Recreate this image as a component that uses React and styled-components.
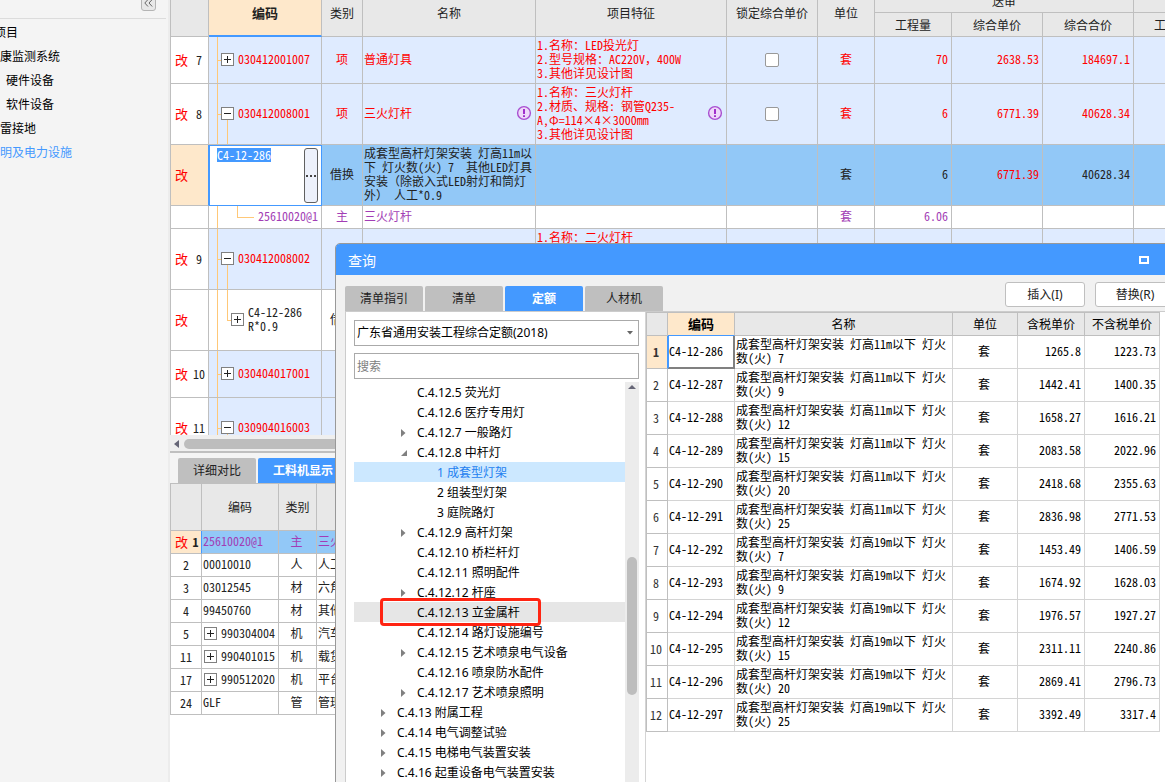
import React from "react";
import styled, { createGlobalStyle, css } from "styled-components";

const songFont = `"Noto Sans Mono CJK SC", "Noto Sans CJK SC", "Liberation Mono", monospace`;
const uiFont = `"Noto Sans", "Noto Sans CJK SC", sans-serif`;

const blue = "#4499ff";
const red = "#ff0000";
const purple = "#a23db5";
const line = "#bfbfbf";
const guide = "#ffc878";

const GlobalStyle = createGlobalStyle`
  * {
    box-sizing: border-box;
  }

  body {
    margin: 0;
    overflow: hidden;
    background: #ffffff;
    color: #222222;
    font-family: ${uiFont};
    font-size: 12px;
    line-height: 14px;
  }

  button, input, select {
    font: inherit;
    color: inherit;
  }
`;

const Page = styled.div`
  position: relative;
  display: flex;
  height: 100vh;
  overflow: hidden;
`;

/* ---------- project tree on the left ---------- */

const Sidebar = styled.nav`
  flex: 0 0 170px;
  overflow: hidden;
  background: #f4f4f4;
  border-right: 2px solid #ececec;
`;

const SidebarHead = styled.div`
  display: flex;
  justify-content: flex-end;
  height: 19px;
  margin-right: 2px;
  padding-right: 10px;
  border-bottom: 1px solid #dcdcdc;
`;

const CollapseButton = styled.button`
  display: flex;
  align-items: center;
  justify-content: center;
  width: 15px;
  height: 16px;
  margin-top: -5px;
  padding: 0;
  border: 1px solid #b4b4b4;
  border-radius: 3px;
  background: #e8e8e8;
  color: #666666;
`;

const ProjectList = styled.ul`
  margin: 2px 0 0 -6px;
  padding: 0;
  list-style: none;
`;

const ProjectItem = styled.li`
  padding-left: ${(props) => props.$indent}px;
  line-height: 24px;
  white-space: nowrap;

  a {
    color: ${(props) => (props.$active ? blue : "#000000")};
    text-decoration: none;
  }
`;

/* ---------- grids ---------- */

const Main = styled.main`
  flex: 1;
  min-width: 0;
  display: flex;
  flex-direction: column;
`;

const TopPane = styled.section`
  flex: 0 0 435px;
  overflow: hidden;
`;

const BottomPane = styled.section`
  flex: 1;
  overflow: hidden;
`;

const Grid = styled.table`
  width: ${(props) => props.$width || "100%"};
  margin-top: ${(props) => props.$scrolled || 0}px;
  table-layout: fixed;
  border-spacing: 0;
  border-left: 1px solid ${line};
  border-top: 1px solid ${line};
  font-family: ${songFont};
`;

const HeadCell = styled.th`
  padding: 0;
  border-right: 1px solid ${line};
  border-bottom: 1px solid ${line};
  background: #e8e8e8;
  font-weight: normal;
  overflow: hidden;
  white-space: nowrap;

  ${(props) => props.$current && css`
    background: #fee8cb;
    border-bottom: ${props.$thin ? 1 : 2}px solid ${blue};
    font-weight: bold;
    font-size: 13px;
  `}
`;

const rowColors = {
  item: "#dfebff",
  active: "#92c8f7",
  plain: "#ffffff",
};

const Row = styled.tr`
  height: ${(props) => props.$height}px;
  background: ${(props) => rowColors[props.$kind || "plain"]};
`;

const Cell = styled.td`
  position: relative;
  padding: 0 3px 2px 1px;
  border-right: 1px solid ${(props) => props.$border || line};
  border-bottom: 1px solid ${(props) => props.$border || line};
  color: ${(props) => props.$color || "inherit"};
  text-align: ${(props) => props.$align || "left"};
  white-space: pre;
  overflow: hidden;
`;

const CenterCell = styled(Cell)`
  padding: 0 0 2px;
  text-align: center;
`;

const NumberCell = styled.th`
  padding: 0 0 0 4px;
  border-right: 1px solid ${(props) => (props.$current ? blue : line)};
  border-bottom: 1px solid ${line};
  background: ${(props) => (props.$current ? "#fee8cb" : "#ffffff")};
  font-weight: ${(props) => (props.$current ? "bold" : "normal")};
`;

const NumberLabel = styled.div`
  display: flex;
  align-items: center;
  gap: 2px;
  padding-right: ${(props) => (props.$changed ? 0 : 4)}px;
`;

const Changed = styled.span`
  flex: 0 0 13px;
  color: ${red};
  font-size: 13px;
  font-weight: normal;
`;

const RowNumber = styled.span`
  flex: 1;
  text-align: center;
  white-space: nowrap;
`;

const Split = styled.div`
  display: flex;
  align-items: center;
  justify-content: space-between;
`;

const Tick = styled.input`
  appearance: none;
  display: block;
  width: 14px;
  height: 14px;
  margin: 1px auto 0;
  border: 1px solid #999999;
  border-radius: 2px;
  background: #ffffff;
`;

const CodeLine = styled.div`
  display: flex;
  align-items: center;
  gap: 4px;
  padding-left: ${(props) => props.$indent}px;
`;

const ToggleButton = styled.button`
  position: relative;
  z-index: 1;
  display: block;
  flex: 0 0 13px;
  height: 13px;
  padding: 0;
  border: 1px solid #808080;
  background: #ffffff;
  color: #222222;

  svg {
    display: block;
  }
`;

const GuideLine = styled.i`
  position: absolute;
  left: ${(props) => props.$left}px;
  top: ${(props) => props.$top || "0"};
  bottom: ${(props) => props.$bottom || "-1px"};
  width: 1px;
  background: ${guide};
`;

const GuideStub = styled.i`
  position: absolute;
  left: ${(props) => props.$left}px;
  top: 50%;
  width: ${(props) => props.$width}px;
  height: 1px;
  background: ${guide};
`;

const EditCell = styled(Cell)`
  padding: 2px 3px 2px 7px;
  border: 1px solid ${blue};
  background: #ffffff;
`;

const Editor = styled.div`
  display: flex;
  justify-content: space-between;
  height: 55px;
`;

const CodeInput = styled.input`
  width: 54px;
  height: 14px;
  padding: 0;
  border: 0;
  outline: 0;
  background: ${blue};
  color: #ffffff;
`;

const MoreButton = styled.button`
  display: flex;
  align-items: center;
  justify-content: center;
  width: 14px;
  height: 55px;
  padding: 0;
  border: 1px solid #606060;
  border-radius: 3px;
  background: #edf1fb;
`;

const ScrollBar = styled.div`
  display: flex;
  align-items: center;
  gap: 5px;
  height: 18px;
  padding: 1px 0 0 4px;
  background: #efefef;
  border-bottom: 2px solid ${line};
`;

const ScrollThumb = styled.div`
  flex: 1;
  height: 10px;
  border-radius: 5px;
  background: #bdbdbd;
`;

const Tabs = styled.div`
  display: flex;
  gap: 2px;
  padding: 5px 0 0 8px;
  background: #f4f4f4;
`;

const Tab = styled.button`
  width: ${(props) => (props.$wide ? 90 : 78)}px;
  height: 25px;
  padding: 0;
  border: 0;
  border-radius: 2px 2px 0 0;
  background: ${(props) => (props.$active ? blue : "#bfbfbf")};
  color: ${(props) => (props.$active ? "#ffffff" : "#222222")};
  font-weight: ${(props) => (props.$active ? "bold" : "normal")};
`;

/* ---------- query window ---------- */

const Window = styled.section`
  position: absolute;
  top: 243px;
  left: 335px;
  right: -20px;
  bottom: -20px;
  display: flex;
  flex-direction: column;
  overflow: hidden;
  border: 1px solid #999999;
  border-radius: 5px 5px 0 0;
  background: #f1f1f1;
`;

const TitleBar = styled.header`
  display: flex;
  align-items: center;
  justify-content: space-between;
  height: 31px;
  padding: 0 35px 0 12px;
  background: ${blue};
  color: #ffffff;

  h2 {
    margin: 3px 0 0;
    font-size: 14px;
    font-weight: normal;
  }

  button {
    padding: 0;
    border: 0;
    background: none;
  }

  svg {
    display: block;
  }
`;

const WindowBar = styled.div`
  display: flex;
  align-items: flex-end;
  justify-content: space-between;
  height: 36px;
  padding: 0 9px 0 9px;
`;

const WindowTabs = styled(Tabs)`
  padding: 0;
  background: none;
`;

const Actions = styled.div`
  display: flex;
  gap: 10px;
  margin-bottom: 4px;
`;

const ActionButton = styled.button`
  width: 80px;
  height: 25px;
  padding: 0;
  border: 1px solid ${line};
  border-radius: 3px;
  background: #ffffff;
`;

const WindowBody = styled.div`
  flex: 1;
  display: flex;
  min-height: 0;
  margin-left: 9px;
  border: 1px solid #cccccc;
  background: #ffffff;
`;

const Picker = styled.div`
  flex: 0 0 300px;
  display: flex;
  flex-direction: column;
  padding: 8px 6px 0 8px;
  border-right: 1px solid #d4d4d4;
`;

const SelectBox = styled.div`
  display: flex;
  align-items: center;
  height: 26px;
  margin-bottom: 7px;
  padding-right: 5px;
  border: 1px solid #aaaaaa;
  color: #000000;

  select {
    flex: 1;
    height: 24px;
    padding: 0 2px;
    border: 0;
    outline: 0;
    appearance: none;
    background: none;
  }
`;

const SearchInput = styled.input`
  height: 26px;
  margin-bottom: 3px;
  padding: 0 2px;
  border: 1px solid #aaaaaa;
  outline: 0;

  &::placeholder {
    color: #808080;
    opacity: 1;
  }
`;

const TreeArea = styled.div`
  flex: 1;
  display: flex;
  min-height: 0;
  overflow: hidden;
`;

const Tree = styled.ul`
  flex: 1;
  margin: 0;
  padding: 0;
  list-style: none;
`;

const treeColors = {
  selected: "#cce8ff",
  hovered: "#e6e6e6",
};

const TreeItem = styled.li`
  position: relative;
  display: flex;
  align-items: center;
  height: 20px;
  padding-top: 2px;
  padding-left: ${(props) => 26 + props.$level * 20}px;
  background: ${(props) => treeColors[props.$state] || "transparent"};
  color: ${(props) => (props.$state === "selected" ? "#1f7ff0" : "#000000")};
  white-space: nowrap;

  svg {
    flex: 0 0 17px;
  }
`;

const Highlight = styled.span`
  position: absolute;
  left: 26px;
  top: -4px;
  width: 161px;
  height: 28px;
  border: 3px solid #ff2412;
  border-radius: 4px;
`;

const TreeScroll = styled.div`
  flex: 0 0 14px;
  display: flex;
  flex-direction: column;
  align-items: center;
  padding-top: 3px;
  background: #ececec;
`;

const TreeThumb = styled.div`
  width: 10px;
  height: 138px;
  margin-top: 168px;
  border-radius: 5px;
  background: #bdbdbd;
`;

const Results = styled.div`
  flex: 1;
  min-width: 0;
  padding-right: 23px;
`;

const ResultGrid = styled(Grid)`
  color: #000000;
`;

const QuotaNumber = styled(NumberCell)`
  padding: 0 2px 0 0;
  color: #333333;
`;

const CurrentCode = styled(Cell)`
  padding: 0 0 1px;
  border: 1px solid #808080;
  border-right-width: 2px;
  border-bottom-width: 2px;
  border-top: 0;
  border-left-color: ${blue};
`;

function Toggle({ open }) {
  return (
    <ToggleButton aria-label={open ? "收起" : "展开"}>
      <svg width="11" height="11" viewBox="0 0 11 11" stroke="currentColor" fill="none">
        <path d={open ? "M2 5.5h7" : "M2 5.5h7M5.5 2v7"} />
      </svg>
    </ToggleButton>
  );
}

function Warning() {
  return (
    <svg width="16" height="16" viewBox="0 0 16 16" fill="none">
      <circle cx="8" cy="8" r="6.4" fill="#eed9fa" stroke="#a94fd0" strokeWidth="1.4" />
      <path d="M8 4v5" stroke="#a030cc" strokeWidth="2" />
      <path d="M8 10.3v1.7" stroke="#a030cc" strokeWidth="2" />
    </svg>
  );
}

function Arrow({ state }) {
  return (
    <svg width="17" height="10" viewBox="0 0 17 10" fill="#808080">
      {state === "closed" && <path d="M1 1l4.5 4L1 9z" />}
      {state === "open" && <path d="M7 2v6H1z" />}
    </svg>
  );
}

function RowLabel({ number, changed, current }) {
  return (
    <NumberCell scope="row" $current={current}>
      <NumberLabel $changed={changed}>
        {changed && <Changed>改</Changed>}
        <RowNumber>{number}</RowNumber>
      </NumberLabel>
    </NumberCell>
  );
}

const items = [
  {
    no: "7", kind: "item", height: 47, code: "030412001007", type: "项", name: "普通灯具",
    feature: "1.名称：LED投光灯\n2.型号规格：AC220V，400W\n3.其他详见设计图",
    unit: "套", qty: "70", price: "2638.53", total: "184697.1", color: red, tick: true,
  },
  {
    no: "8", kind: "item", height: 61, code: "030412008001", type: "项", name: "三火灯杆", open: true, warn: true,
    feature: "1.名称：三火灯杆\n2.材质、规格: 钢管Q235-\nA,Φ=114×4×3000mm\n3.其他详见设计图",
    unit: "套", qty: "6", price: "6771.39", total: "40628.34", color: red, tick: true,
  },
  {
    kind: "active", height: 61, code: "C4-12-286", type: "借换", editing: true,
    name: "成套型高杆灯架安装 灯高11m以\n下 灯火数(火) 7  其他LED灯具\n安装（除嵌入式LED射灯和筒灯\n外） 人工*0.9",
    unit: "套", qty: "6", price: "6771.39", priceColor: red, total: "40628.34",
  },
  {
    kind: "plain", height: 23, code: "25610020@1", type: "主", name: "三火灯杆", leaf: true, unchanged: true,
    unit: "套", qty: "6.06", color: purple,
  },
  {
    no: "9", kind: "item", height: 61, code: "030412008002", open: true,
    feature: "1.名称：二火灯杆\n\n\n\n",
    color: red,
  },
  { kind: "plain", height: 61, code: "C4-12-286\nR*0.9", type: "借换", child: true },
  { no: "10", kind: "item", height: 47, code: "030404017001", color: red },
  { no: "11", kind: "item", height: 61, code: "030904016003", open: true, color: red },
];

function CodeCell({ item }) {
  if (item.editing) {
    return (
      <EditCell>
        <Editor>
          <CodeInput aria-label="编码" defaultValue={item.code} />
          <MoreButton aria-label="更多">
            <svg width="10" height="2" viewBox="0 0 10 2" fill="#444444">
              <path d="M0 0h2v2H0zM4 0h2v2H4zM8 0h2v2H8z" />
            </svg>
          </MoreButton>
        </Editor>
      </EditCell>
    );
  }

  if (item.leaf) {
    return (
      <Cell $color={item.color}>
        <GuideLine $left={8} />
        <GuideLine $left={28} $bottom="50%" />
        <GuideStub $left={28} $width={17} />
        <CodeLine $indent={48}>{item.code}</CodeLine>
      </Cell>
    );
  }

  if (item.child) {
    return (
      <Cell>
        <GuideLine $left={8} />
        <GuideLine $left={18} $bottom="50%" />
        <GuideStub $left={18} $width={4} />
        <CodeLine $indent={21}>
          <Toggle />
          <span>{item.code}</span>
        </CodeLine>
      </Cell>
    );
  }

  return (
    <Cell $color={item.color}>
      <GuideLine $left={8} />
      <GuideStub $left={8} $width={4} />
      {item.open && <GuideLine $left={18} $top="50%" />}
      <CodeLine $indent={11}>
        <Toggle open={item.open} />
        <span>{item.code}</span>
      </CodeLine>
    </Cell>
  );
}

function ItemGrid() {
  return (
    <Grid $width="1041px" $scrolled={-11}>
      <colgroup>
        {[38, 113, 41, 173, 191, 91, 57, 77, 91, 91, 77].map((width, i) => (
          <col key={i} width={width} />
        ))}
      </colgroup>
      <thead>
        <Row $height={23}>
          <HeadCell rowSpan={2} />
          <HeadCell rowSpan={2} $current>编码</HeadCell>
          <HeadCell rowSpan={2}>类别</HeadCell>
          <HeadCell rowSpan={2}>名称</HeadCell>
          <HeadCell rowSpan={2}>项目特征</HeadCell>
          <HeadCell rowSpan={2}>锁定综合单价</HeadCell>
          <HeadCell rowSpan={2}>单位</HeadCell>
          <HeadCell colSpan={3}>送审</HeadCell>
          <HeadCell />
        </Row>
        <Row $height={24}>
          <HeadCell>工程量</HeadCell>
          <HeadCell>综合单价</HeadCell>
          <HeadCell>综合合价</HeadCell>
          <HeadCell>工程量</HeadCell>
        </Row>
      </thead>
      <tbody>
        {items.map((item, i) => (
          <Row key={i} $height={item.height} $kind={item.kind}>
            <RowLabel number={item.no} changed={!item.unchanged} current={item.editing} />
            <CodeCell item={item} />
            <CenterCell $color={item.color} $align="center">{item.type}</CenterCell>
            <Cell $color={item.color}>
              <Split>
                {item.name}
                {item.warn && <Warning />}
              </Split>
            </Cell>
            <Cell $color={item.color}>
              <Split>
                {item.feature}
                {item.warn && <Warning />}
              </Split>
            </Cell>
            <CenterCell>{item.tick && <Tick type="checkbox" aria-label="锁定综合单价" />}</CenterCell>
            <CenterCell $color={item.color} $align="center">{item.unit}</CenterCell>
            <Cell $align="right" $color={item.color}>{item.qty}</Cell>
            <Cell $align="right" $color={item.priceColor || item.color}>{item.price}</Cell>
            <Cell $align="right" $color={item.color}>{item.total}</Cell>
            <Cell />
          </Row>
        ))}
      </tbody>
    </Grid>
  );
}

const materials = [
  ["1", "25610020@1", "主", "三火灯杆"],
  ["2", "00010010", "人", "人工"],
  ["3", "03012545", "材", "六角"],
  ["4", "99450760", "材", "其他"],
  ["5", "990304004", "机", "汽车"],
  ["11", "990401015", "机", "载货"],
  ["17", "990512020", "机", "平台"],
  ["24", "GLF", "管", "管理"],
];

function MaterialGrid() {
  return (
    <Grid $width="321px">
      <colgroup>
        {[31, 77, 38, 174].map((width, i) => (
          <col key={i} width={width} />
        ))}
      </colgroup>
      <thead>
        <Row $height={47}>
          <HeadCell />
          <HeadCell>编码</HeadCell>
          <HeadCell>类别</HeadCell>
          <HeadCell>名称</HeadCell>
        </Row>
      </thead>
      <tbody>
        {materials.map(([no, code, type, name], i) => (
          <Row key={no} $height={23} $kind={i === 0 ? "active" : "plain"}>
            <RowLabel number={no} changed={i === 0} current={i === 0} />
            <Cell $color={i === 0 ? purple : undefined}>
              {type === "机" ? (
                <CodeLine $indent={1}>
                  <Toggle />
                  {code}
                </CodeLine>
              ) : code}
            </Cell>
            <Cell $align="center" $color={i === 0 ? purple : undefined}>{type}</Cell>
            <Cell $color={i === 0 ? purple : undefined}>{name}</Cell>
          </Row>
        ))}
      </tbody>
    </Grid>
  );
}

const treeItems = [
  { level: 1, text: "C.4.12.5 荧光灯" },
  { level: 1, text: "C.4.12.6 医疗专用灯" },
  { level: 1, text: "C.4.12.7 一般路灯", arrow: "closed" },
  { level: 1, text: "C.4.12.8 中杆灯", arrow: "open" },
  { level: 2, text: "1 成套型灯架", state: "selected" },
  { level: 2, text: "2 组装型灯架" },
  { level: 2, text: "3 庭院路灯" },
  { level: 1, text: "C.4.12.9 高杆灯架", arrow: "closed" },
  { level: 1, text: "C.4.12.10 桥栏杆灯" },
  { level: 1, text: "C.4.12.11 照明配件" },
  { level: 1, text: "C.4.12.12 杆座", arrow: "closed" },
  { level: 1, text: "C.4.12.13 立金属杆", state: "hovered" },
  { level: 1, text: "C.4.12.14 路灯设施编号" },
  { level: 1, text: "C.4.12.15 艺术喷泉电气设备", arrow: "closed" },
  { level: 1, text: "C.4.12.16 喷泉防水配件" },
  { level: 1, text: "C.4.12.17 艺术喷泉照明", arrow: "closed" },
  { level: 0, text: "C.4.13 附属工程", arrow: "closed" },
  { level: 0, text: "C.4.14 电气调整试验", arrow: "closed" },
  { level: 0, text: "C.4.15 电梯电气装置安装", arrow: "closed" },
  { level: 0, text: "C.4.16 起重设备电气装置安装", arrow: "closed" },
];

const quotas = [
  ["C4-12-286", "11m", "7", "1265.8", "1223.73"],
  ["C4-12-287", "11m", "9", "1442.41", "1400.35"],
  ["C4-12-288", "11m", "12", "1658.27", "1616.21"],
  ["C4-12-289", "11m", "15", "2083.58", "2022.96"],
  ["C4-12-290", "11m", "20", "2418.68", "2355.63"],
  ["C4-12-291", "11m", "25", "2836.98", "2771.53"],
  ["C4-12-292", "19m", "7", "1453.49", "1406.59"],
  ["C4-12-293", "19m", "9", "1674.92", "1628.03"],
  ["C4-12-294", "19m", "12", "1976.57", "1927.27"],
  ["C4-12-295", "19m", "15", "2311.11", "2240.86"],
  ["C4-12-296", "19m", "20", "2869.41", "2796.73"],
  ["C4-12-297", "19m", "25", "3392.49", "3317.4"],
];

function QuotaGrid() {
  return (
    <ResultGrid>
      <colgroup>
        <col width="21" />
        <col width="67" />
        <col />
        <col width="65" />
        <col width="67" />
        <col width="75" />
      </colgroup>
      <thead>
        <Row $height={23}>
          <HeadCell />
          <HeadCell $current $thin>编码</HeadCell>
          <HeadCell>名称</HeadCell>
          <HeadCell>单位</HeadCell>
          <HeadCell>含税单价</HeadCell>
          <HeadCell>不含税单价</HeadCell>
        </Row>
      </thead>
      <tbody>
        {quotas.map(([code, height, heads, taxed, untaxed], i) => {
          const CodeBox = i === 0 ? CurrentCode : Cell;
          return (
            <Row key={code} $height={33}>
              <QuotaNumber scope="row" $current={i === 0}>{i + 1}</QuotaNumber>
              <CodeBox $border="#d4d4d4">{code}</CodeBox>
              <Cell $border="#d4d4d4">{`成套型高杆灯架安装 灯高${height}以下 灯火\n数(火) ${heads}`}</Cell>
              <Cell $border="#d4d4d4" $align="center">套</Cell>
              <Cell $border="#d4d4d4" $align="right">{taxed}</Cell>
              <Cell $border="#d4d4d4" $align="right">{untaxed}</Cell>
            </Row>
          );
        })}
      </tbody>
    </ResultGrid>
  );
}

function QueryWindow() {
  return (
    <Window>
      <TitleBar>
        <h2>查询</h2>
        <button aria-label="最大化">
          <svg width="10" height="8" viewBox="0 0 10 8" fill="none" stroke="#ffffff" strokeWidth="2">
            <path d="M1 1h8v6H1z" />
          </svg>
        </button>
      </TitleBar>
      <WindowBar>
        <WindowTabs>
          <Tab>清单指引</Tab>
          <Tab>清单</Tab>
          <Tab $active>定额</Tab>
          <Tab>人材机</Tab>
        </WindowTabs>
        <Actions>
          <ActionButton>插入(I)</ActionButton>
          <ActionButton>替换(R)</ActionButton>
        </Actions>
      </WindowBar>
      <WindowBody>
        <Picker>
          <SelectBox>
            <select aria-label="定额库">
              <option>广东省通用安装工程综合定额(2018)</option>
            </select>
            <svg width="6" height="4" viewBox="0 0 6 4" fill="#666666">
              <path d="M0 0h6L3 3.5z" />
            </svg>
          </SelectBox>
          <SearchInput aria-label="搜索" placeholder="搜索" />
          <TreeArea>
            <Tree>
              {treeItems.map((item) => (
                <TreeItem key={item.text} $level={item.level} $state={item.state}>
                  <Arrow state={item.arrow} />
                  {item.text}
                  {item.state === "hovered" && <Highlight />}
                </TreeItem>
              ))}
            </Tree>
            <TreeScroll>
              <svg width="8" height="4" viewBox="0 0 8 4" fill="#666677">
                <path d="M4 0l4 4H0z" />
              </svg>
              <TreeThumb />
            </TreeScroll>
          </TreeArea>
        </Picker>
        <Results>
          <QuotaGrid />
        </Results>
      </WindowBody>
    </Window>
  );
}

export default function App() {
  return (
    <>
      <GlobalStyle />
      <Page>
        <Sidebar>
          <SidebarHead>
            <CollapseButton aria-label="收起">
              <svg width="9" height="8" viewBox="0 0 9 8" fill="none" stroke="currentColor">
                <path d="M4 .5L.8 4 4 7.5M8.2 .5L5 4l3.2 3.5" />
              </svg>
            </CollapseButton>
          </SidebarHead>
          <ProjectList>
            <ProjectItem $indent={0}><a href="#project">项目</a></ProjectItem>
            <ProjectItem $indent={6}><a href="#monitor">康监测系统</a></ProjectItem>
            <ProjectItem $indent={12}><a href="#hardware">硬件设备</a></ProjectItem>
            <ProjectItem $indent={12}><a href="#software">软件设备</a></ProjectItem>
            <ProjectItem $indent={6}><a href="#grounding">雷接地</a></ProjectItem>
            <ProjectItem $indent={6} $active><a href="#lighting">明及电力设施</a></ProjectItem>
          </ProjectList>
        </Sidebar>
        <Main>
          <TopPane>
            <ItemGrid />
          </TopPane>
          <ScrollBar>
            <svg width="5" height="8" viewBox="0 0 5 8" fill="#666677">
              <path d="M5 0v8L0 4z" />
            </svg>
            <ScrollThumb />
          </ScrollBar>
          <BottomPane>
            <Tabs>
              <Tab>详细对比</Tab>
              <Tab $active $wide>工料机显示</Tab>
            </Tabs>
            <MaterialGrid />
          </BottomPane>
        </Main>
        <QueryWindow />
      </Page>
    </>
  );
}
